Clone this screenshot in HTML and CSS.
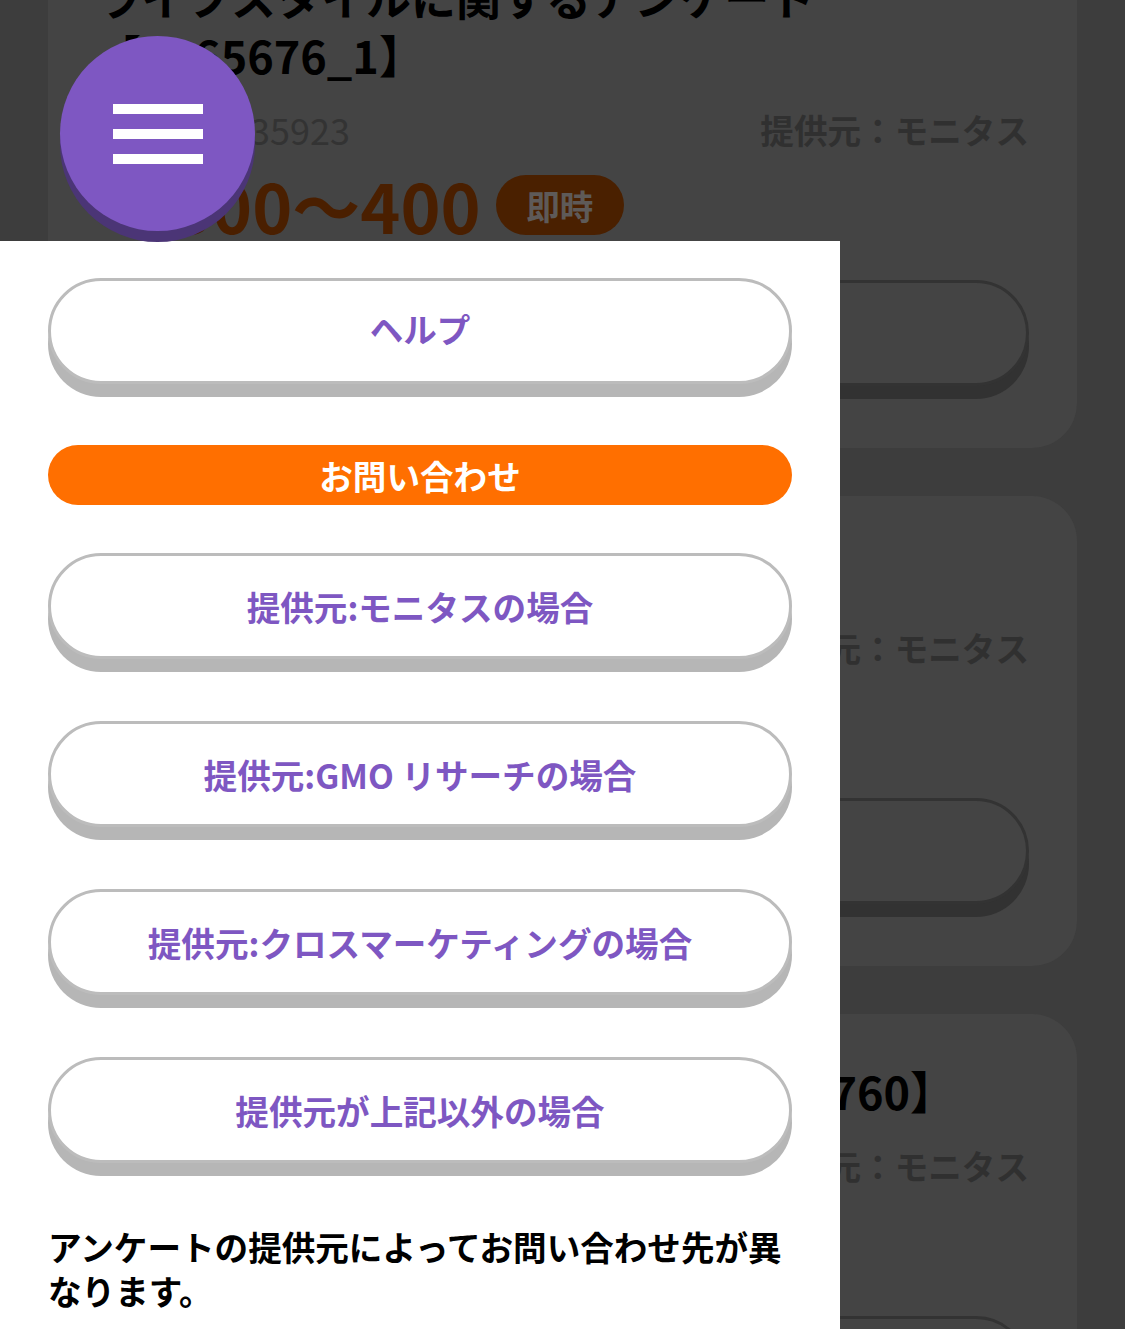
FILE: index.html
```html
<!DOCTYPE html>
<html lang="ja">
<head>
<meta charset="utf-8">
<title>メニュー</title>
<link rel="stylesheet" href="styles.css">
</head>
<body>
<main class="page">
  <div class="list">
    <article class="card">
      <h2 class="card-title">ライフスタイルに関するアンケート【2065676_1】</h2>
      <div class="card-meta"><span class="card-id"><span class="id-label">案件ID：</span>35923</span><span class="card-provider">提供元：モニタス</span></div>
      <div class="card-price"><span class="spacer"></span><span class="price">300～400</span><span class="badge">即時</span></div>
      <div class="card-btn"></div>
    </article>
    <article class="card">
      <h2 class="card-title">食に関する調査【2063321】</h2>
      <div class="card-meta"><span class="card-id"><span class="id-label">案件ID：</span>35877</span><span class="card-provider">提供元：モニタス</span></div>
      <div class="card-price"><span class="spacer"></span><span class="price">100～200</span><span class="badge">即時</span></div>
      <div class="card-btn"></div>
    </article>
    <article class="card">
      <h2 class="card-title">生活習慣に関するアンケート【2061760】</h2>
      <div class="card-meta"><span class="card-id"><span class="id-label">案件ID：</span>35802</span><span class="card-provider">提供元：モニタス</span></div>
      <div class="card-price"><span class="spacer"></span><span class="price">50～100</span><span class="badge">即時</span></div>
      <div class="card-btn"></div>
    </article>
  </div>
</main>

<nav class="drawer">
  <a class="d-btn d-help">ヘルプ</a>
  <a class="d-contact">お問い合わせ</a>
  <a class="d-btn">提供元:モニタスの場合</a>
  <a class="d-btn">提供元:GMO リサーチの場合</a>
  <a class="d-btn">提供元:クロスマーケティングの場合</a>
  <a class="d-btn">提供元が上記以外の場合</a>
  <p class="d-note">アンケートの提供元によってお問い合わせ先が異なります。</p>
</nav>

<button class="menu-btn" aria-label="メニュー">
  <span class="bar"></span>
  <span class="bar"></span>
  <span class="bar"></span>
</button>
</body>
</html>
```

FILE: styles.css
```css
html, body {
  margin: 0;
  padding: 0;
}

body {
  width: 1125px;
  height: 1329px;
  overflow: hidden;
  position: relative;
  background: #3d3d3d;
  font-family: "Noto Sans CJK JP", "Noto Sans", sans-serif;
}

.page {
  width: 100%;
}

.list {
  display: flex;
  flex-direction: column;
  gap: 48px;
  padding: 0 48px;
  margin-top: -80px;
}

.card {
  background: #444444;
  border-radius: 45px;
  padding: 48px 48px 62px;
}

.card-title {
  margin: 0 0 23px;
  font-size: 45px;
  line-height: 58px;
  font-weight: 700;
  color: #000;
}

.card-meta {
  display: flex;
  justify-content: space-between;
  align-items: center;
  height: 44px;
  margin-bottom: 24px;
}

.card-id {
  font-size: 36px;
  color: #333333;
  display: flex;
  align-items: center;
}

.id-label {
  display: inline-block;
  width: 154px;
}

.card-provider {
  font-size: 33.6px;
  font-weight: 700;
  color: #303030;
}

.card-price {
  display: flex;
  align-items: center;
  height: 60px;
  margin-bottom: 45px;
}

.spacer {
  width: 76px;
  height: 60px;
}

.price {
  font-size: 68px;
  font-weight: 700;
  line-height: 60px;
  color: #4a1f00;
}

.badge {
  margin-left: 15px;
  width: 128px;
  height: 60px;
  border-radius: 30px;
  background: #4a2000;
  color: #5e5a58;
  font-size: 33.6px;
  font-weight: 700;
  display: flex;
  align-items: center;
  justify-content: center;
}

.card-btn {
  box-sizing: border-box;
  height: 106px;
  border: 3px solid #333333;
  border-radius: 53px;
  background: #444444;
  box-shadow: 0 13px 0 #323232;
}

/* drawer */
.drawer {
  position: absolute;
  left: 0;
  top: 241px;
  bottom: 0;
  width: 840px;
  box-sizing: border-box;
  background: #ffffff;
  padding: 37px 48px 0;
  display: flex;
  flex-direction: column;
}

.d-btn {
  box-sizing: border-box;
  height: 106px;
  border: 3px solid #bcbcbc;
  border-radius: 53px;
  background: #ffffff;
  box-shadow: 0 13px 0 #b6b6b6;
  display: flex;
  align-items: center;
  justify-content: center;
  color: #7e57c2;
  font-size: 33.6px;
  font-weight: 700;
  margin-bottom: 62px;
}

.d-help {
  margin-bottom: 61px;
  padding-bottom: 6px;
}

.d-contact {
  height: 60px;
  border-radius: 30px;
  background: #ff6f00;
  color: #ffffff;
  display: flex;
  align-items: center;
  justify-content: center;
  font-size: 33.6px;
  font-weight: 700;
  margin-bottom: 48px;
}

.d-note {
  margin: 0;
  font-size: 33.6px;
  line-height: 44px;
  font-weight: 700;
  color: #000;
}

/* floating menu button */
.menu-btn {
  position: absolute;
  left: 60px;
  top: 36px;
  width: 195px;
  height: 195px;
  padding: 0;
  border: none;
  border-radius: 50%;
  background: #7e57c2;
  box-shadow: 0 11px 0 #4b3576;
  display: flex;
  flex-direction: column;
  align-items: center;
  justify-content: center;
  gap: 15px;
}

.bar {
  display: block;
  width: 90px;
  height: 10px;
  background: #ffffff;
}
```
